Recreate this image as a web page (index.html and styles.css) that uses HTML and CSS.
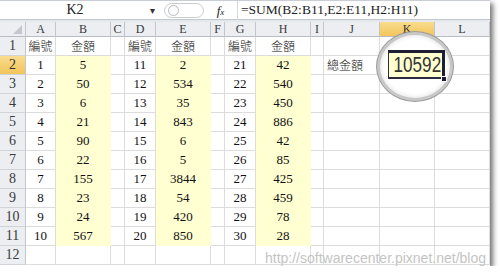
FILE: index.html
```html
<!doctype html>
<html lang="zh-Hant">
<head>
<meta charset="UTF-8">
<title>SUM</title>
<link rel="stylesheet" href="styles.css">
<script>
var cols=["A","B","C","D","E","F","G","H","I","J","K","L"];
var rows=[
	["編號","金額","","編號","金額","","編號","金額","","","",""],
	["1","5","","11","2","","21","42","","總金額","",""],
	["2","50","","12","534","","22","540","","","",""],
	["3","6","","13","35","","23","450","","","",""],
	["4","21","","14","843","","24","886","","","",""],
	["5","90","","15","6","","25","42","","","",""],
	["6","22","","16","5","","26","85","","","",""],
	["7","155","","17","3844","","27","425","","","",""],
	["8","23","","18","54","","28","459","","","",""],
	["9","24","","19","420","","29","78","","","",""],
	["10","567","","20","850","","30","28","","","",""],
	["","","","","","","","","","","",""]
];

function cell(cls,txt){
	var d=document.createElement("div");
	d.className=cls;
	d.innerText=txt;
	return d;
}
function build(){
	var sheet=document.getElementById("sheet");
	sheet.appendChild(cell("head corner",""));
	for(var c=0;c<cols.length;c++){
		sheet.appendChild(cell(cols[c]=="K"?"head active":"head",cols[c]));
	}
	for(var r=0;r<rows.length;r++){
		sheet.appendChild(cell(r==1?"rowhead active":"rowhead",r+1));
		for(var c=0;c<cols.length;c++){
			var cls="cell";
			var col=cols[c];
			if((col=="B"||col=="E"||col=="H")&&r>=1&&r<=10) cls+=" fill";
			if(r==0&&rows[r][c]!="") cls+=" cjk";
			if(col=="J") cls+=" left cjk";
			sheet.appendChild(cell(cls,rows[r][c]));
		}
	}
}
addEventListener("load",function(){
	build();
})
</script>
</head>
<body>
	<div class="window">
		<div class="formula-bar">
			<div class="name-box">K2</div>
			<div class="arrow">&#9662;</div>
			<div class="splitter"><span class="knob"></span></div>
			<div class="fx">f<sub>x</sub></div>
			<div class="formula">=SUM(B2:B11,E2:E11,H2:H11)</div>
		</div>
		<div class="gap"></div>
		<div class="sheet" id="sheet"></div>
		<div class="magnifier">
			<div class="zoom-cell"><span class="zoom-num">10592</span><span class="handle"></span></div>
		</div>
		<div class="watermark">http://softwarecenter.pixnet.net/blog</div>
	</div>
</body>
</html>
```
FILE: styles.css
```css
body{
	margin:0;
	background:#fff;
	font-family:"Liberation Serif","Noto Sans CJK TC",serif;
}
.window{
	position:relative;
	width:490px;
	height:266px;
	background:#fff;
	box-shadow:3px 3px 5px rgba(0,0,0,0.55);
	overflow:hidden;
}
.formula-bar{
	height:20px;
	display:flex;
	align-items:center;
	border-top:1px solid #c9ced6;
	border-bottom:1px solid #c3c8cf;
	box-sizing:border-box;
	background:#fff;
	font-size:14px;
	color:#222;
}
.name-box{
	width:150px;
	text-align:center;
}
.arrow{
	width:12px;
	font-size:10px;
	color:#333;
}
.splitter{
	width:40px;
	height:15px;
	margin-left:2px;
	border:1px solid #c8cbd0;
	border-radius:8px;
	box-sizing:border-box;
	display:flex;
	align-items:center;
	padding-left:3px;
}
.knob{
	width:9px;
	height:9px;
	border:1px solid #b5b9bf;
	border-radius:50%;
}
.fx{
	width:34px;
	text-align:center;
	font-style:italic;
	font-size:13px;
	border-right:1px solid #d3d6da;
	height:19px;
	line-height:19px;
	box-sizing:border-box;
}
.fx sub{
	font-size:9px;
	vertical-align:0;
}
.formula{
	padding-left:3px;
	font-size:13.5px;
}
.gap{
	height:2px;
	background:#e4e7eb;
}
.sheet{
	display:grid;
	grid-template-columns:26px 30px 55px 14px 31px 55px 14px 31px 55px 13px 56px 55px 55px;
	grid-template-rows:15px repeat(12,19px);
	font-size:13px;
	color:#111;
}
.head,.rowhead{
	background:#eceef1;
	color:#3a3a3a;
	border-right:1px solid #c2c6cc;
	border-bottom:1px solid #b8bdc4;
	box-sizing:border-box;
	text-align:center;
	font-size:12px;
	line-height:14px;
}
.rowhead{
	font-size:14px;
	line-height:18px;
	border-bottom:1px solid #d0d4d9;
}
.corner{
	position:relative;
}
.corner::after{
	content:"";
	position:absolute;
	right:3px;
	bottom:2px;
	border-left:9px solid transparent;
	border-bottom:9px solid #c4c8cd;
}
.active{
	background:linear-gradient(#f9dc8e,#f2c55a);
	color:#333;
}
.cell{
	border-right:1px solid #dcdcdc;
	border-bottom:1px solid #dcdcdc;
	box-sizing:border-box;
	text-align:center;
	line-height:18px;
	white-space:nowrap;
}
.cjk{
	font-size:12px;
	font-family:"Noto Sans CJK TC",sans-serif;
	font-weight:300;
}
.left{
	text-align:left;
	padding-left:3px;
}
.fill{
	background:#ffffd2;
	border-color:#ffffd2;
}
.magnifier{
	position:absolute;
	left:377px;
	top:32px;
	width:70px;
	height:63px;
	border:3px solid #c8c8c8;
	border-radius:50%;
	background:#fff;
	box-shadow:0 0 0 1px #9a9a9a,inset 0 0 0 1px #f2f2f2,inset 0 0 5px rgba(0,0,0,0.15);
}
.zoom-cell{
	position:absolute;
	left:8px;
	top:15px;
	width:57px;
	height:29px;
	box-sizing:border-box;
	background:#ffffd0;
	border-top:3px solid #1c1e34;
	border-right:3px solid #1c1e34;
	border-bottom:2px solid #2a2c40;
	border-left:1px solid #2a2c40;
	display:flex;
	align-items:center;
	justify-content:flex-end;
}
.zoom-num{
	display:block;
	font-family:"Liberation Sans",sans-serif;
	font-size:22px;
	line-height:24px;
	color:#333;
	transform:scaleX(0.78);
	transform-origin:right center;
	margin-right:1px;
}
.handle{
	position:absolute;
	right:-5px;
	bottom:-5px;
	width:4px;
	height:4px;
	background:#1c1e34;
	border:1px solid #fff;
}
.watermark{
	position:absolute;
	right:4px;
	bottom:0px;
	font-family:"Liberation Sans",sans-serif;
	font-size:14px;
	color:#c4c4c4;
}
```
